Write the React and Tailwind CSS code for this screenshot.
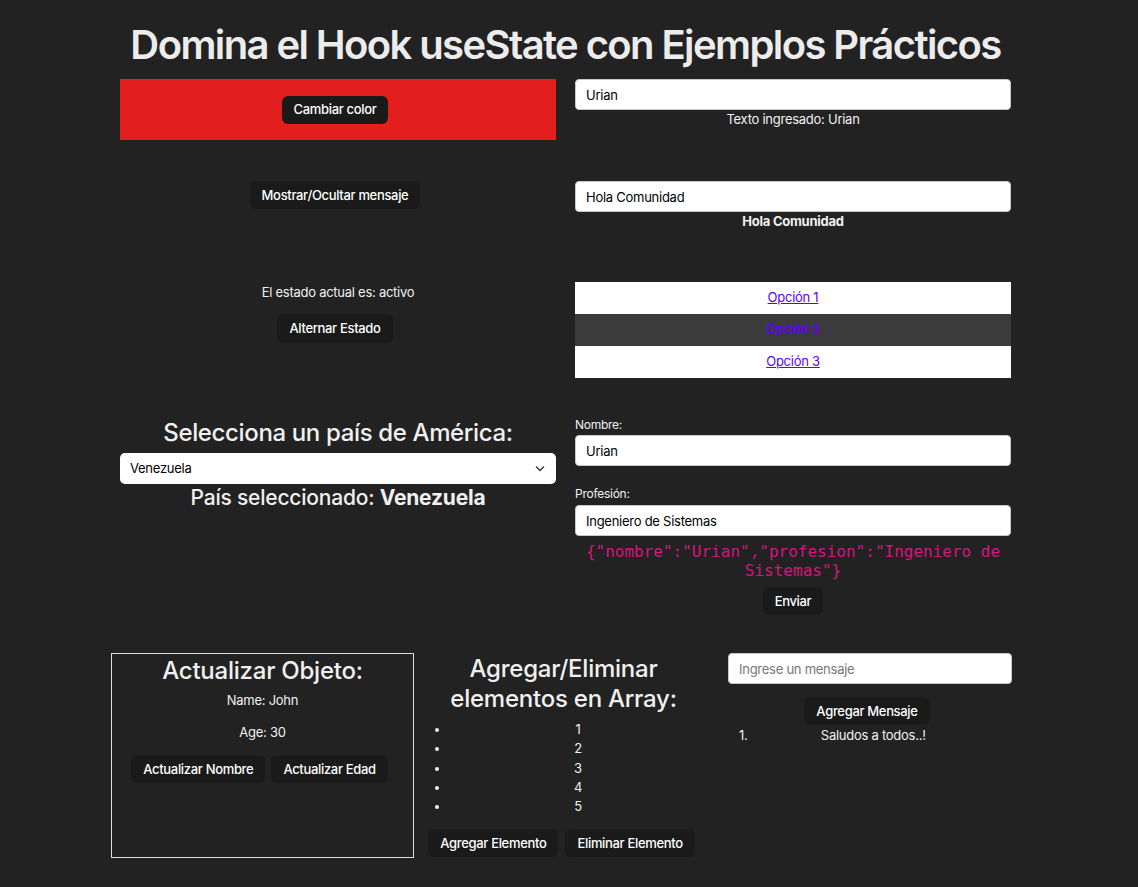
import { useState } from 'react';

const Btn = ({ children, className = '' }) => (
  <button className={`bg-[#1a1a1a] text-white text-[13px] font-medium tracking-[-0.025em] rounded-[6px] px-3 h-[28px] leading-none ${className}`}>
    {children}
  </button>
);

const Field = ({ value, placeholder, className = '' }) => (
  <input
    defaultValue={value}
    placeholder={placeholder}
    className={`w-full h-[31px] bg-white text-black text-[13px] tracking-[-0.02em] rounded-[4px] border border-[#c8c8c8] px-[10px] outline-none placeholder:text-[#777] ${className}`}
  />
);

export default function App() {
  const [pais] = useState('Venezuela');

  return (
    <div className="min-h-screen bg-[#222222] text-[#f0f0f0] text-[13px] tracking-[-0.02em] font-['Inter',sans-serif] pb-6">
      <div className="w-[891px] ml-[120px]">
        <h1 className="text-[40px] font-semibold text-center leading-[48px] tracking-[-1.6px] pt-[21px] mb-[10px] text-[#ececec] whitespace-nowrap">
          Domina el Hook useState con Ejemplos Prácticos
        </h1>

        {/* fila 1 */}
        <div className="grid grid-cols-2 gap-x-[19px] items-start">
          <div className="h-[61px] bg-[#e21f1c] flex items-center justify-center">
            <Btn className="mr-[6px]">Cambiar color</Btn>
          </div>
          <div>
            <Field value="Urian" />
            <p className="text-center leading-[18px]">Texto ingresado: Urian</p>
          </div>
        </div>

        {/* fila 2 */}
        <div className="grid grid-cols-2 gap-x-[19px] items-start mt-[41px]">
          <div className="flex justify-center">
            <Btn className="mr-[6px]">Mostrar/Ocultar mensaje</Btn>
          </div>
          <div>
            <Field value="Hola Comunidad" />
            <p className="text-center font-bold leading-[18px]">Hola Comunidad</p>
          </div>
        </div>

        {/* fila 3 */}
        <div className="grid grid-cols-2 gap-x-[19px] items-start mt-[52px]">
          <div className="flex flex-col items-center pt-[1px]">
            <p className="leading-[18px]">El estado actual es: activo</p>
            <Btn className="mt-[13px] h-[29px] mr-[6px]">Alternar Estado</Btn>
          </div>
          <ul>
            <li className="h-[32px] bg-white flex items-center justify-center">
              <a href="#" className="text-[#5b00ff] underline">Opción 1</a>
            </li>
            <li className="h-[32px] bg-[#3b3b3b] flex items-center justify-center">
              <a href="#" className="text-[#5b00ff] underline font-semibold">Opción 2</a>
            </li>
            <li className="h-[32px] bg-white flex items-center justify-center">
              <a href="#" className="text-[#5b00ff] underline">Opción 3</a>
            </li>
          </ul>
        </div>

        {/* fila 4 */}
        <div className="grid grid-cols-2 gap-x-[19px] items-start mt-[39px]">
          <div className="flex flex-col items-center">
            <h2 className="text-[24px] font-medium leading-[30px] tracking-[-0.015em] mt-[1px]">Selecciona un país de América:</h2>
            <div className="relative w-full mt-[5px]">
              <select
                defaultValue={pais}
                className="w-full h-[31px] appearance-none bg-white text-black text-[13px] rounded-[5px] px-[10px] outline-none"
              >
                <option>Venezuela</option>
                <option>Colombia</option>
                <option>México</option>
              </select>
              <svg className="absolute right-[11px] top-[12px] pointer-events-none" width="10" height="7" viewBox="0 0 10 7" fill="none">
                <path d="M1 1.5 5 5.5 9 1.5" stroke="#333" strokeWidth="1.3" />
              </svg>
            </div>
            <p className="text-[21px] font-medium leading-[26px] tracking-[-0.01em] mt-[1px]">
              País seleccionado: <span className="font-bold">{pais}</span>
            </p>
          </div>
          <div className="flex flex-col">
            <label className="text-[12px] leading-[16px]">Nombre:</label>
            <Field value="Urian" className="mt-[2px]" />
            <label className="text-[12px] leading-[16px] mt-[20px]">Profesión:</label>
            <Field value="Ingeniero de Sistemas" className="mt-[3px]" />
            <pre className="whitespace-pre-wrap text-center text-[#d4157f] font-['DejaVu_Sans_Mono',monospace] text-[16px] tracking-normal leading-[19px] mt-[6px]">
              {'{"nombre":"Urian","profesion":"Ingeniero de Sistemas"}'}
            </pre>
            <div className="flex justify-center mt-[7px]">
              <Btn>Enviar</Btn>
            </div>
          </div>
        </div>
      </div>

      {/* fila 5 */}
      <div className="flex items-start ml-[111px] mt-[38px]">
        <div className="w-[303px] h-[205px] border border-[#dcdcdc] flex flex-col items-center">
          <h2 className="text-[24px] font-medium leading-[30px] tracking-[-0.01em] mt-[2px]">Actualizar Objeto:</h2>
          <p className="mt-[5px] leading-[18px]">Name: John</p>
          <p className="mt-[14px] leading-[18px]">Age: 30</p>
          <div className="flex gap-[6px] mt-[14px] mr-[6px]">
            <Btn>Actualizar Nombre</Btn>
            <Btn>Actualizar Edad</Btn>
          </div>
        </div>

        <div className="w-[285px] ml-[7px] flex flex-col">
          <h2 className="text-[24px] font-medium leading-[30px] tracking-[-0.01em] text-center mt-[1px]">
            Agregar/Eliminar elementos en Array:
          </h2>
          <ul className="list-disc pl-[29px] mt-[6px]">
            {[1, 2, 3, 4, 5].map((n) => (
              <li key={n} className="text-center leading-[19.25px]">{n}</li>
            ))}
          </ul>
          <div className="flex justify-center gap-[7px] mt-[13px] mr-[4px]">
            <Btn>Agregar Elemento</Btn>
            <Btn>Eliminar Elemento</Btn>
          </div>
        </div>

        <div className="w-[284px] ml-[22px] flex flex-col">
          <Field placeholder="Ingrese un mensaje" className="h-[30px]" />
          <div className="flex justify-center mt-[13px] mr-[6px]">
            <Btn>Agregar Mensaje</Btn>
          </div>
          <ol className="mt-[1px]">
            <li className="flex leading-[18px]">
              <span className="ml-[11px]">1.</span>
              <span className="flex-1 text-center mr-[13px]">Saludos a todos..!</span>
            </li>
          </ol>
        </div>
      </div>
    </div>
  );
}
